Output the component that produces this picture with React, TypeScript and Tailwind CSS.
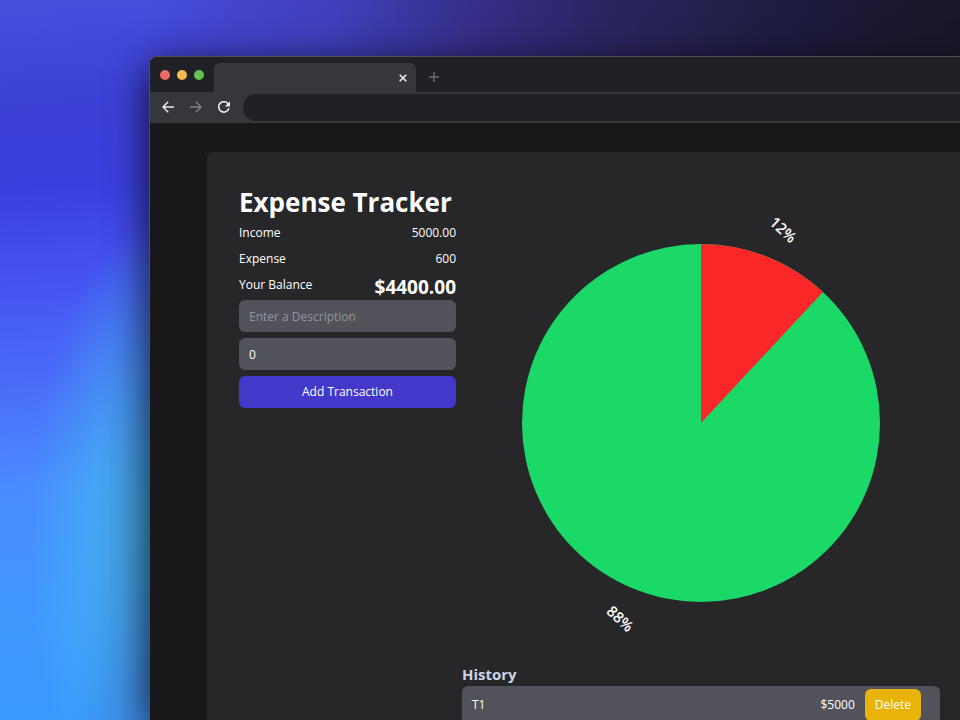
import { useState } from "react";

const transactions = [{ name: "T1", amount: 5000 }];

function TrafficLights() {
  return (
    <div className="flex items-center gap-[7px] pl-2.5 pt-[13px]">
      <span className="size-2.5 rounded-full bg-[#ee6a64]" />
      <span className="size-2.5 rounded-full bg-[#f5bd4f]" />
      <span className="size-2.5 rounded-full bg-[#61c354]" />
    </div>
  );
}

function BrowserChrome() {
  return (
    <header className="bg-[#202124]">
      <div className="flex h-[35px] items-start">
        <div className="w-16">
          <TrafficLights />
        </div>
        <div className="mt-1.5 flex h-[29px] w-[202px] items-center justify-end rounded-t-md bg-[#36373a] pr-2">
          <button type="button" aria-label="Close tab" className="block text-[#e8eaed]">
            <svg viewBox="0 0 10 10" className="size-2.5" stroke="currentColor" strokeWidth="1.6" fill="none">
              <path d="M1.7 1.7 8.3 8.3M8.3 1.7 1.7 8.3" />
            </svg>
          </button>
        </div>
        <button type="button" aria-label="New tab" className="ml-3 mt-3.5 block text-[#68696c]">
          <svg viewBox="0 0 12 12" className="size-3" stroke="currentColor" strokeWidth="1.5" fill="none">
            <path d="M6 1v10M1 6h10" />
          </svg>
        </button>
      </div>
      <div className="flex h-[31px] items-center bg-[#36373a] pl-3">
        <div className="flex items-center gap-4 pb-0.5">
          <button type="button" aria-label="Back" className="block text-[#e8eaed]">
            <svg viewBox="0 0 12 12" className="size-3" stroke="currentColor" strokeWidth="1.5" fill="none">
              <path d="M12 6H1M6.2.8 1 6l5.2 5.2" />
            </svg>
          </button>
          <button type="button" aria-label="Forward" className="block text-[#808184]">
            <svg viewBox="0 0 12 12" className="size-3" stroke="currentColor" strokeWidth="1.5" fill="none">
              <path d="M0 6h11M5.8.8 11 6l-5.2 5.2" />
            </svg>
          </button>
          <button type="button" aria-label="Reload" className="block text-[#e8eaed]">
            <svg viewBox="0 0 12 12" className="size-3" fill="none">
              <path d="M10.9 7.3A5.2 5.2 0 1 1 9.7 2.3L11 3.7" stroke="currentColor" strokeWidth="1.6" />
              <path d="M12 .2v5.2H6.8z" fill="currentColor" />
            </svg>
          </button>
        </div>
        <input
          type="text"
          aria-label="Address"
          className="ml-[13px] h-[27px] min-w-0 flex-1 rounded-l-full bg-[#202124] px-4 text-xs text-white outline-none"
        />
      </div>
    </header>
  );
}

function ExpenseChart() {
  return (
    <svg viewBox="0 0 478 478" role="img" aria-label="Expenses 12%, balance 88%" className="block aspect-square w-full">
      <circle cx="239" cy="239" r="179" fill="#1ad966" />
      <path d="M239 239V60A179 179 0 0 1 361 108Z" fill="#f92727" />
      <g fill="#fff" fontSize="15" textAnchor="middle" className="font-semibold">
        <text transform="translate(321 46) rotate(43)" dy="5">
          12%
        </text>
        <text transform="translate(158 435) rotate(43)" dy="5">
          88%
        </text>
      </g>
    </svg>
  );
}

function Summary() {
  const [description, setDescription] = useState("");
  const [amount, setAmount] = useState("0");
  return (
    <section className="pt-0.5">
      <h1 className="mb-[5px] whitespace-nowrap text-[26px] font-bold leading-8 text-white">Expense Tracker</h1>
      <dl className="leading-5">
        <div className="mb-1.5 flex justify-between">
          <dt>Income</dt>
          <dd>5000.00</dd>
        </div>
        <div className="mb-1.5 flex justify-between">
          <dt>Expense</dt>
          <dd>600</dd>
        </div>
        <div className="flex justify-between">
          <dt>Your Balance</dt>
          <dd className="text-[19px] font-bold leading-[25px]">$4400.00</dd>
        </div>
      </dl>
      <form className="flex flex-col gap-1.5" onSubmit={(event) => event.preventDefault()}>
        <input
          type="text"
          aria-label="Description"
          placeholder="Enter a Description"
          value={description}
          onChange={(event) => setDescription(event.target.value)}
          className="h-8 w-full rounded-md bg-[#52525b] px-2.5 outline-none placeholder:text-[#92949e]"
        />
        <input
          type="text"
          inputMode="numeric"
          aria-label="Amount"
          value={amount}
          onChange={(event) => setAmount(event.target.value)}
          className="h-8 w-full rounded-md bg-[#52525b] px-2.5 outline-none"
        />
        <button type="submit" className="h-8 w-full rounded-md bg-[#4338ca]">
          Add Transaction
        </button>
      </form>
    </section>
  );
}

function History() {
  return (
    <section>
      <h2 className="text-[15px] font-bold leading-6 text-[#cbd5e1]">History</h2>
      <ul>
        {transactions.map((item) => (
          <li key={item.name} className="flex items-center rounded-md bg-[#52525b] py-[3px] pl-2.5 pr-[19px]">
            <span className="flex-1">{item.name}</span>
            <span className="mr-2.5">${item.amount}</span>
            <button type="button" className="h-8 rounded-md bg-[#eab308] px-2.5">
              Delete
            </button>
          </li>
        ))}
      </ul>
    </section>
  );
}

export default function App() {
  return (
    <div className="h-screen overflow-hidden bg-[linear-gradient(96deg,#3d37a000_14%,#403cb0bb_32%,#342c80_48%,#282358_62%,#1e1c40_76%,#16151f_98%),radial-gradient(ellipse_130px_320px_at_160px_540px,#42c0e4_0%,#42b8ec90_50%,#42b0f000_100%),linear-gradient(176deg,#464fdc_0%,#3c40d6_14%,#3a3edc_24%,#4450ee_34%,#4a6af8_48%,#4a8cff_62%,#4098ff_80%,#3399ff_100%)] pl-[149px] pt-14 font-['Open_Sans','Noto_Sans',sans-serif] text-xs text-white">
      <div className="h-full overflow-hidden rounded-tl-lg border-l border-t border-[#505152] bg-[#18181a] shadow-[0_10px_40px_rgba(0,0,0,0.8)]">
        <BrowserChrome />
        <main className="ml-[57px] mt-[29px] grid min-h-full grid-cols-[minmax(0,217fr)_minmax(0,478fr)] items-start gap-1.5 rounded-tl-md bg-[#27272a] py-8 pl-8 pr-5">
          <Summary />
          <div>
            <ExpenseChart />
            <History />
          </div>
        </main>
      </div>
    </div>
  );
}
